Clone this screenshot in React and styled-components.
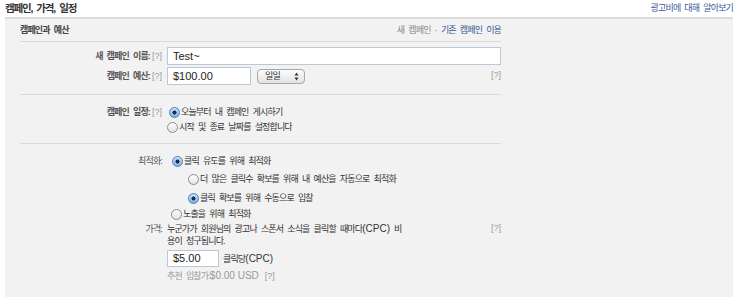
import React from "react";
import styled, { createGlobalStyle } from "styled-components";

const GlobalStyle = createGlobalStyle`
  body {
    margin: 0;
    background: #fff;
    font-family: "Liberation Sans", "Noto Sans CJK KR", sans-serif;
    font-size: 9px;
    line-height: 13px;
    letter-spacing: -0.85px;
    word-spacing: 2.4px;
    color: #333;
  }
`;

const Latin = styled.span`
  letter-spacing: 0;
  word-spacing: 0;
  font-size: 10px;
`;

const Page = styled.div`
  width: 740px;
  padding: 0 7px 0 5px;
  box-sizing: border-box;
`;

const TitleBar = styled.div`
  display: flex;
  justify-content: space-between;
  align-items: center;
  height: 17px;
  padding-bottom: 1px;
  box-sizing: border-box;

  h1 {
    margin: 0;
    font-size: 10.5px;
    font-weight: bold;
    color: #333;
    letter-spacing: -1.2px;
    word-spacing: 2.5px;
  }

  a {
    color: #3b5998;
    text-decoration: none;
  }
`;

const Panel = styled.div`
  background: #f2f2f2;
  border-top: 2px solid #dcdcdc;
  width: 728px;
  height: 280px;
  box-sizing: border-box;
  padding: 0 232px 0 15px;
`;

const PanelHeader = styled.div`
  display: flex;
  justify-content: space-between;
  align-items: center;
  height: 22px;
  border-bottom: 1px solid #dadada;

  strong {
    color: #444;
  }

  span {
    color: #888;
  }

  a {
    color: #3b5998;
    text-decoration: none;
  }
`;

const Section = styled.div`
  display: flex;
  flex-direction: column;
  gap: ${p => p.$gap || 0}px;
  padding: ${p => p.$pad || "6px 0"};
  border-bottom: ${p => (p.$last ? "none" : "1px solid #dadada")};
`;

const Row = styled.div`
  display: grid;
  grid-template-columns: 142px 1fr;
  column-gap: 5px;
  align-items: ${p => (p.$top ? "start" : "center")};
  height: ${p => (p.$h ? `${p.$h}px` : "auto")};
  margin-top: ${p => p.$mt || 0}px;
`;

const Label = styled.div`
  text-align: right;
  font-weight: ${p => (p.$plain ? "normal" : "bold")};
  color: #555;
  white-space: nowrap;
`;

const Help = styled.span`
  font-size: 9px;
  font-weight: normal;
  letter-spacing: 0;
  word-spacing: 0;
  color: #9a9a9a;
  margin-left: 2px;
`;

const Field = styled.div`
  display: flex;
  align-items: center;
  gap: ${p => p.$gap ?? 6}px;
  position: relative;
`;

const TextInput = styled.div`
  width: ${p => p.$w}px;
  height: ${p => p.$h || 18}px;
  box-sizing: border-box;
  background: #fff;
  border: 1px solid #bdc7d8;
  padding: 0 5px;
  display: flex;
  align-items: center;
  font-size: 11px;
  letter-spacing: 0;
  color: #222;
`;

const Select = styled.div`
  width: 48px;
  height: 15px;
  box-sizing: border-box;
  border: 1px solid #a8a8a8;
  border-radius: 4px;
  background: linear-gradient(#fcfcfc, #e2e2e2);
  display: flex;
  align-items: center;
  justify-content: space-between;
  padding: 0 5px 0 7px;
  color: #333;
`;

const RightHelp = styled(Help)`
  position: absolute;
  right: 0;
  top: ${p => p.$top || 0}px;
`;

const Option = styled.div`
  display: flex;
  align-items: center;
  gap: 1px;
  color: #333;
  padding-left: ${p => p.$indent || 0}px;
`;

const Radio = styled.span`
  width: 11px;
  height: 11px;
  box-sizing: border-box;
  border-radius: 50%;
  border: 1px solid ${p => (p.$on ? "#4d7fbf" : "#8c8c8c")};
  background: ${p =>
    p.$on
      ? "radial-gradient(circle, #1b2d44 0 1.8px, transparent 2.3px), linear-gradient(#c9e0fa, #7fb0ea)"
      : "linear-gradient(#fefefe, #e2e2e2)"};
  flex-shrink: 0;
`;

const Body = styled.div`
  color: #333;
  line-height: 12px;
  padding-right: 20px;
`;

const Hint = styled.div`
  color: #999;
`;

const Arrows = () => (
  <svg width="5" height="9" viewBox="0 0 5 9">
    <path d="M2.5 0.5 L4.5 3.5 L0.5 3.5 Z M2.5 8.5 L4.5 5.5 L0.5 5.5 Z" fill="#333" />
  </svg>
);

export default function App() {
  return (
    <Page>
      <GlobalStyle />
      <TitleBar>
        <h1>캠페인, 가격, 일정</h1>
        <a href="#">광고비에 대해 알아보기</a>
      </TitleBar>
      <Panel>
        <PanelHeader>
          <strong>캠페인과 예산</strong>
          <span>
            새 캠페인 · <a href="#">기존 캠페인 이용</a>
          </span>
        </PanelHeader>

        <Section $gap={2} $pad="5px 0 9px">
          <Row>
            <Label>
              새 캠페인 이름:<Help>[?]</Help>
            </Label>
            <Field>
              <TextInput $w={334}>Test~</TextInput>
            </Field>
          </Row>
          <Row>
            <Label>
              캠페인 예산:<Help>[?]</Help>
            </Label>
            <Field>
              <TextInput $w={84}>$100.00</TextInput>
              <Select>
                일일
                <Arrows />
              </Select>
              <RightHelp $top={2}>[?]</RightHelp>
            </Field>
          </Row>
        </Section>

        <Section $pad="10px 0 8px">
          <Row $h={15}>
            <Label>
              캠페인 일정:<Help>[?]</Help>
            </Label>
            <Option $indent={2}>
              <Radio $on />
              오늘부터 내 캠페인 게시하기
            </Option>
          </Row>
          <Row $h={15}>
            <span />
            <Option>
              <Radio />
              시작 및 종료 날짜를 설정합니다
            </Option>
          </Row>
        </Section>

        <Section $last $pad="8px 0 0">
          <Row $h={18}>
            <Label $plain>최적화:</Label>
            <Option $indent={5}>
              <Radio $on />
              클릭 유도를 위해 최적화
            </Option>
          </Row>
          <Row $h={19}>
            <span />
            <Option $indent={21}>
              <Radio />
              더 많은 클릭수 확보를 위해 내 예산을 자동으로 최적화
            </Option>
          </Row>
          <Row $h={18}>
            <span />
            <Option $indent={21}>
              <Radio $on />
              클릭 확보를 위해 수동으로 입찰
            </Option>
          </Row>
          <Row $h={14}>
            <span />
            <Option $indent={4}>
              <Radio />
              노출을 위해 최적화
            </Option>
          </Row>
          <Row $top $mt={2}>
            <Label $plain style={{ lineHeight: "12px" }}>가격:</Label>
            <Field>
              <Body>
                누군가가 회원님의 광고나 스폰서 소식을 클릭할 때마다<Latin>(CPC)</Latin> 비
                <br />
                용이 청구됩니다.
              </Body>
              <RightHelp $top={-1}>[?]</RightHelp>
            </Field>
          </Row>
          <Row $mt={3}>
            <span />
            <Field $gap={4}>
              <TextInput $w={52} $h={17}>
                $5.00
              </TextInput>
              <Body>
                클릭당<Latin>(CPC)</Latin>
              </Body>
            </Field>
          </Row>
          <Row $mt={2}>
            <span />
            <Hint>
              추천 입찰가:<Latin>$0.00 USD</Latin> <Help>[?]</Help>
            </Hint>
          </Row>
        </Section>
      </Panel>
    </Page>
  );
}
